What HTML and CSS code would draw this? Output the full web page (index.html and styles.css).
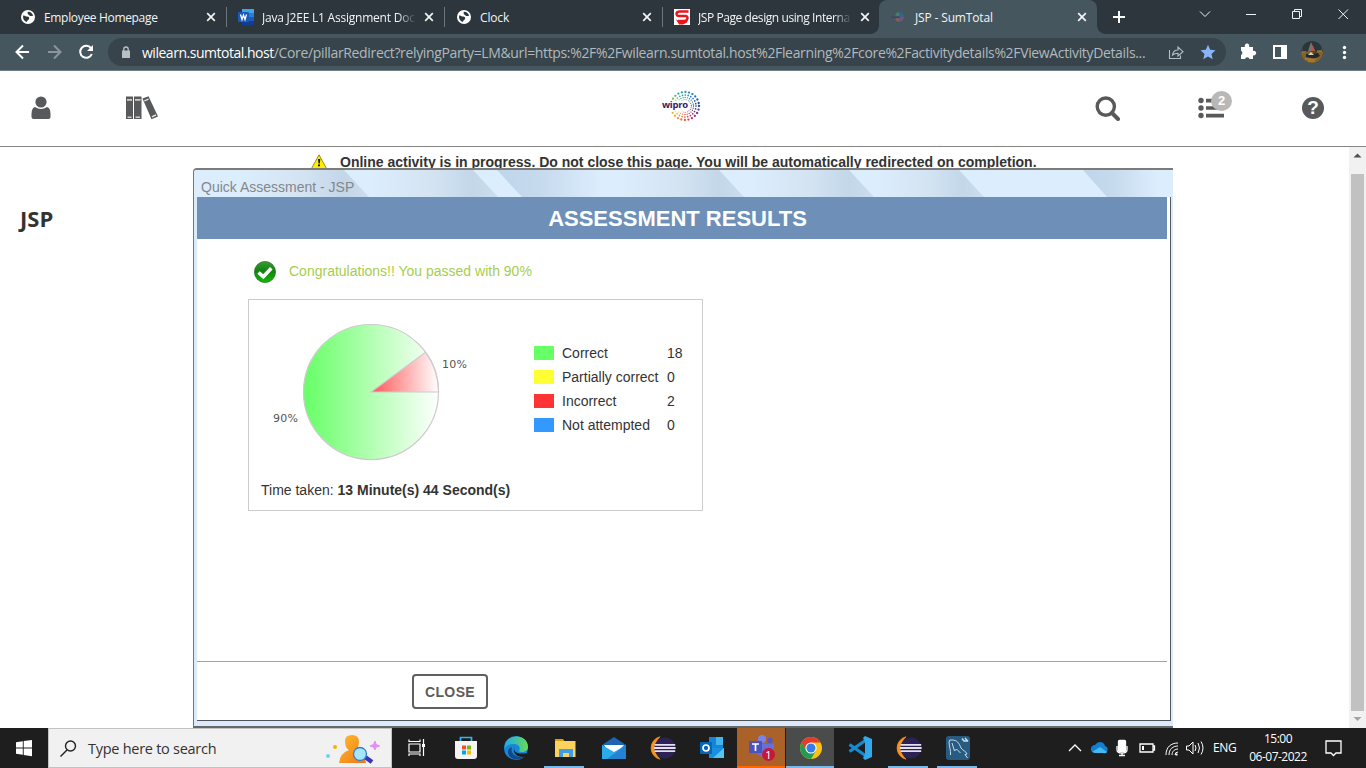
FILE: index.html
```html
<!DOCTYPE html>
<html lang="en">
<head>
<meta charset="utf-8">
<title>JSP - SumTotal</title>
<link rel="stylesheet" href="styles.css">
</head>
<body>
<svg class="defs" width="0" height="0" aria-hidden="true">
  <symbol id="globe" viewBox="0 0 14 14"><circle cx="7" cy="7" r="7" fill="#fff"/><path d="M2.200 5.600C4 5 4.200 6.600 6 6.500c1.800 0 2.700 1.100 2 2.400-.6 1.200-1.800 1.200-2.300 3-2.600-.7-4.100-3.200-3.500-6.300zM6.500 1.900c.8 1-.5 1.800.8 2.500 1.200.6 1.500 1.800 3 1.500l1.800-.2c-.4-2.100-2.600-4.100-5.600-3.800z" fill="#2c363c"/></symbol>
  <symbol id="cross" viewBox="0 0 10 10"><path d="M1.200 1.200l7.600 7.600M8.800 1.200L1.200 8.800" stroke="#f2f4f5" stroke-width="1.700"/></symbol>
  <symbol id="eclipse" viewBox="0 0 26 24"><path d="M10 .8A11.500 11.500 0 0 0 10 23.200A15 15 0 0 1 10 .8z" fill="#f7941e" stroke="#f7941e" stroke-width=".8"/><circle cx="15" cy="12" r="10.600" fill="#2c2255"/><path d="M4.600 8.900h20.600M4 12h21.600M4.600 15.100h20.600" stroke="#e4e0ee" stroke-width="1.800"/></symbol>
  <mask id="dots" maskUnits="userSpaceOnUse" x="0" y="0" width="32" height="32">
    <g fill="none" stroke="#fff" stroke-linecap="round">
      <circle cx="16" cy="16" r="14" stroke-width="2.300" stroke-dasharray="0 3.665"/>
      <circle cx="16" cy="16" r="11" stroke-width="1.700" stroke-dasharray="0 2.880"/>
      <circle cx="16" cy="16" r="8.500" stroke-width="1.300" stroke-dasharray="0 2.225"/>
      <circle cx="16" cy="16" r="6.300" stroke-width="1" stroke-dasharray="0 1.800"/>
    </g>
    <rect x="0" y="10.500" width="18" height="11" fill="#000"/>
  </mask>
</svg>

<div class="tabs">
  <div class="tab"><svg class="fav globe"><use href="#globe"/></svg><span class="tab-title t1">Employee Homepage</span><svg class="tab-x"><use href="#cross"/></svg></div>
  <div class="tab"><svg class="fav" viewBox="0 0 16 16"><path d="M4 0h12v4H4z" fill="#41a5ee"/><path d="M4 4h12v4H4z" fill="#2b7cd3"/><path d="M4 8h12v4H4z" fill="#185abd"/><path d="M4 12h12v4H4z" fill="#103f91"/><rect y="3" width="11" height="10" rx="1" fill="#185abd"/><path d="M2.500 5.500l1.500 5 1.500-4.500L7 10.500l1.500-5" fill="none" stroke="#fff" stroke-width="1.300"/></svg><span class="tab-title fade t2">Java J2EE L1 Assignment Doc</span><svg class="tab-x"><use href="#cross"/></svg></div>
  <div class="tab"><svg class="fav globe"><use href="#globe"/></svg><span class="tab-title">Clock</span><svg class="tab-x"><use href="#cross"/></svg></div>
  <div class="tab last"><svg class="fav" viewBox="0 0 16 16"><path d="M0 0h16v16H0z" fill="#fff"/><path d="M14.500 2.500H6C1.500 2.500 1.500 7 5 7h6.500c3 0 2.500 4.500-1 5H4" fill="none" stroke="#e8151b" stroke-width="2.400"/><path d="M1.500 9.500c2 3 10 3.500 13-1.500l-1.500 5.500-4 2H5z" fill="#e8151b"/></svg><span class="tab-title fade t4">JSP Page design using Interna</span><svg class="tab-x"><use href="#cross"/></svg></div>
  <div class="tab active"><svg class="fav" viewBox="0 0 16 16"><path d="M8 8V3a5 5 0 0 1 5 5z" fill="#39638a"/><path d="M8 8h5a5 5 0 0 1-5 5z" fill="#75517d"/><path d="M8 3a5 5 0 0 0-4 3l4 2z" fill="#438177"/><path d="M8 13a5 5 0 0 1-4-3l4-2z" fill="#79645c"/><path d="M0 7.300h9v1.800H0z" fill="#4b426a"/></svg><span class="tab-title t5">JSP - SumTotal</span><svg class="tab-x"><use href="#cross"/></svg></div>
  <svg class="newtab" viewBox="0 0 14 14"><path d="M7 1v12M1 7h12" stroke="#fff" stroke-width="2"/></svg>
  <svg class="winctl" viewBox="0 0 160 34" fill="none" stroke="#f0f2f3" stroke-width="1"><path d="M15 11.500l5 5 5-5M61 14.500h10M107.500 11.500h7v7h-7zM109.500 11.500v-2h7v7h-2M153.500 9.500l9.500 9.500M163 9.500l-9.500 9.500"/></svg>
</div>

<div class="toolbar">
  <svg class="nav" viewBox="0 0 94 36" fill="none" stroke-width="2"><path d="M14 18H1.500M8 11.500L1.500 18 8 24.500" stroke="#fff"/><path d="M33 18h12.500M39 11.500l6.500 6.500-6.500 6.500" stroke="#8a969c"/><path d="M76 14.200A6 6 0 1 0 76.800 20" stroke="#fff"/><path d="M78 11v6h-6z" fill="#fff"/></svg>
  <div class="omni">
    <svg class="lock" viewBox="0 0 10 12"><path d="M1 4.500h8V12H1z" fill="#b8c0c4"/><path d="M2.800 5V3.200a2.200 2.200 0 0 1 4.400 0V5" fill="none" stroke="#b8c0c4" stroke-width="1.300"/></svg>
    <span class="url"><b>wilearn.sumtotal.host</b>/Core/pillarRedirect?relyingParty=LM&amp;url=https:%2F%2Fwilearn.sumtotal.host%2Flearning%2Fcore%2Factivitydetails%2FViewActivityDetails...</span>
    <svg class="share" viewBox="0 0 16 16" fill="none" stroke="#b5bfc4" stroke-width="1.100"><path d="M1.500 6v8.500h11v-3M4.500 11C5 7.500 7 6 10 6V3l5 4.700-5 4.300V9.200C7.500 9.200 6 9.500 4.500 11z"/></svg>
    <svg class="star" viewBox="0 0 16 16"><path d="M8 .8l2.200 5 5.300.500-4 3.600 1.200 5.300L8 12.400l-4.700 2.800 1.200-5.300-4-3.600 5.300-.5z" fill="#8ab4f8"/></svg>
  </div>
  <svg class="ext" viewBox="0 0 120 36"><path d="M1 13h4a2.300 2.300 0 1 1 4 0h4v4a2.300 2.300 0 1 1 0 4.200V25H9.500a2.300 2.300 0 0 0-4.500 0H1v-4a2.300 2.300 0 0 0 0-4.200z" fill="#fff"/><path d="M34 12h12v12H34z" fill="none" stroke="#fff" stroke-width="2"/><path d="M41 12h5v12h-5z" fill="#fff"/>
    <circle cx="72" cy="18" r="11" fill="#44433b"/><path d="M61 18a11 11 0 0 0 22 0l-3-1-5 2-6-2-4 2z" fill="#84632b"/><path d="M63 12a11 11 0 0 1 18 0v5H63z" fill="#28373e"/><path d="M71 8l-3 9h7z" fill="#7e6f68"/><path d="M72.500 11l-1.500 6h4z" fill="#b9563e"/><path d="M66 20l12-1 2 3-6 3-8-2z" fill="#24282a"/><path d="M68 21l3-3 3 3z" fill="#d3d2c4"/><path d="M65 25h11M68 27h7M62 18h4M77 17h5" stroke="#c08f37"/>
    <g fill="#fff"><circle cx="104.500" cy="13.500" r="1.700"/><circle cx="104.500" cy="18.500" r="1.700"/><circle cx="104.500" cy="23.500" r="1.700"/></g></svg>
</div>

<header class="top">
  <svg class="user" viewBox="0 0 20 24" fill="#58595a"><circle cx="10" cy="6" r="5.600"/><path d="M4 11q6 4 12 0 3.500 1 3.500 7v3q0 2-2 2h-15q-2 0-2-2v-3q0-6 3.500-7z"/></svg>
  <svg class="books" viewBox="0 0 34 24"><path d="M1 .5h7V23H1zM9 .5h7.500V23H9z" fill="#58595a"/><path d="M2 3h5v1.800H2zM10 3h5.500v1.800H10zM2.500 20.500h4V22h-4zM10.500 20.500h4.500V22h-4.500z" fill="#d5cbc8"/><path d="M17.500 2.500L23.500.3 33 20.500l-6.500 2.800z" fill="#58595a"/><path d="M19.300 5l4.200-1.800M27 20.800l4-1.900" stroke="#eee" stroke-width="1.300"/></svg>
  <div class="logo"><div class="rings"></div><span>wipro</span></div>
  <svg class="search" viewBox="0 0 25 25" fill="none" stroke="#58595a"><circle cx="10.800" cy="10.600" r="8.600" stroke-width="3.400"/><path d="M17 17l6 6" stroke-width="4" stroke-linecap="round"/></svg>
  <div class="todo"><svg viewBox="0 0 26 22"><g fill="#58595a"><circle cx="3" cy="3.500" r="2.700"/><circle cx="3" cy="11" r="2.700"/><circle cx="3" cy="18.500" r="2.700"/><path d="M8 1.800h18v3.600H8zM8 9.200h18v3.600H8zM8 16.800h18v3.600H8z"/></g></svg><span class="badge">2</span></div>
  <div class="help">?</div>
</header>

<main class="page">
  <h1 class="course">JSP</h1>
  <div class="column">
    <div class="notice"><svg class="warn" viewBox="0 0 16 15"><path d="M8 .8L15.500 14.500H.5z" fill="#ffed00" stroke="#77731e" stroke-width=".8"/><path d="M7 5h2.300l-.5 4.500H7.500zM7 10.500h2v1.700H7z" fill="#111"/></svg><span>Online activity is in progress. Do not close this page. You will be automatically redirected on completion.</span></div>
    <section class="dialog">
      <div class="dialog-title"><svg class="shine" viewBox="0 0 980 27" preserveAspectRatio="none"><defs><linearGradient id="sh"><stop offset="0" stop-color="#dcedfd"/><stop offset=".5" stop-color="#d3e3f2"/><stop offset=".8" stop-color="#c3d7e9"/><stop offset="1" stop-color="#cbdded"/></linearGradient><linearGradient id="sr"><stop offset="0" stop-color="#bfd5ea"/><stop offset=".4" stop-color="#c6daed"/><stop offset="1" stop-color="#dcedfd"/></linearGradient></defs><path d="M0 0h980v27H0z" fill="#dcedfd"/><path d="M45 0h105l25 27H45z" fill="url(#sh)"/><path d="M175 0h104l25 27H175z" fill="url(#sh)"/><path d="M303 0h105v27h-80z" fill="url(#sr)"/><path d="M425 0h100l25 27H425z" fill="url(#sh)"/><path d="M555 0h100l25 27H555z" fill="url(#sh)"/><path d="M682 0h83l25 27H682z" fill="url(#sh)"/><path d="M889 0h75v27h-51z" fill="url(#sr)"/></svg><span>Quick Assessment - JSP</span></div>
      <div class="dialog-body">
        <h2 class="band">ASSESSMENT RESULTS</h2>
        <div class="results">
          <p class="pass"><svg viewBox="0 0 22 22"><defs><linearGradient id="ok" y2="1" x2="0"><stop stop-color="#399d34"/><stop offset=".45" stop-color="#128111"/><stop offset="1" stop-color="#13ba08"/></linearGradient></defs><circle cx="11" cy="11" r="10.600" fill="url(#ok)" stroke="#23772b" stroke-width=".7"/><path d="M4.500 11.500l4.800 4.200 8-8.500" fill="none" stroke="#fff" stroke-width="3.600"/></svg><span>Congratulations!! You passed with 90%</span></p>
          <div class="card">
            <div class="summary">
              <svg class="pie" viewBox="0 0 230 170"><defs><linearGradient id="g"><stop stop-color="#66ff66"/><stop offset="1" stop-color="#fff"/></linearGradient><linearGradient id="r"><stop stop-color="#ff5555"/><stop offset="1" stop-color="#fff"/></linearGradient></defs><circle cx="122" cy="92" r="67.500" fill="url(#g)" stroke="#ccc" stroke-width="1.200"/><path d="M122 92L176.600 52.300A67.500 67.500 0 0 1 189.500 92z" fill="url(#r)" stroke="#ccc" stroke-width="1.200"/><text x="193" y="68" textLength="25">10%</text><text x="24" y="122" textLength="25">90%</text></svg>
              <div class="legend">
                <i class="c1"></i><span>Correct</span><span>18</span>
                <i class="c2"></i><span>Partially correct</span><span>0</span>
                <i class="c3"></i><span>Incorrect</span><span>2</span>
                <i class="c4"></i><span>Not attempted</span><span>0</span>
              </div>
            </div>
            <p class="time">Time taken: <b>13 Minute(s) 44 Second(s)</b></p>
          </div>
        </div>
        <div class="actions"><button class="close">CLOSE</button></div>
      </div>
    </section>
  </div>
  <div class="scroll"><svg viewBox="0 0 17 27"><path d="M4.500 10.500h8l-4-4z" fill="#505050"/></svg><div class="thumb"></div><svg class="down" viewBox="0 0 17 17"><path d="M4.500 6h8l-4 4z" fill="#a3a3a3"/></svg></div>
</main>

<footer class="taskbar">
  <svg class="start" viewBox="0 0 48 40"><path d="M16 14.300l6.800-1v6.200H16zM23.700 13.100l8.300-1.200v7.600h-8.300zM16 20.500h6.800v6.300l-6.800-1zM23.700 20.500H32v7.700L23.700 27z" fill="#fff"/></svg>
  <div class="find"><svg class="glass" viewBox="0 0 17 17" fill="none" stroke="#222" stroke-width="1.400"><circle cx="10.500" cy="6" r="5"/><path d="M7 10l-6.500 6.500"/></svg><span>Type here to search</span>
    <svg class="person" viewBox="0 0 56 34"><defs><linearGradient id="pe" x2="1" y2="1"><stop stop-color="#ffbd2c"/><stop offset="1" stop-color="#ef7519"/></linearGradient></defs><circle cx="10" cy="15" r="2" fill="#f7b500"/><circle cx="3" cy="24" r="2" fill="#68d9ed"/><path d="M20 9q0-6 7-6 7 0 7 7-1 6-1 8 6 2 8 13H14q1-10 10-13-4-2-4-9z" fill="url(#pe)"/><path d="M40 25l7 5" stroke="#3b35bd" stroke-width="4.500"/><circle cx="35" cy="22" r="6.500" fill="#a7e5fa" stroke="#367ed0" stroke-width="1.300"/><path d="M50 9l1.200 3.500 3.500 1.500-3.500 1-1.200 3-1.500-3-3.500-1 3.500-1.500z" fill="#e48cf8" stroke="#e48cf8"/></svg></div>
  <div class="apps">
    <div class="app"><svg viewBox="0 0 24 24" fill="none" stroke="#fff" stroke-width="1.200"><path d="M4 8h11v8H4zM4 3.500v2h11v-2M4 20v-2h11v2M18.500 3v17"/><path d="M17 8h3v3h-3z" fill="#fff" stroke="none"/></svg></div>
    <div class="app"><svg viewBox="0 0 24 24"><path d="M6.500 6V1.500h11V6" fill="none" stroke="#32b6ee" stroke-width="1.700"/><path d="M1 5h22v15q0 3-3 3H4q-3 0-3-3z" fill="#f4f4f4"/><path d="M8 9.500h4v4H8z" fill="#f25022"/><path d="M13 9.500h4v4h-4z" fill="#7fba00"/><path d="M8 14.500h4v4H8z" fill="#00a4ef"/><path d="M13 14.500h4v4h-4z" fill="#ffb900"/></svg></div>
    <div class="app"><svg viewBox="0 0 24 24"><defs><linearGradient id="ed"><stop stop-color="#24a9e8"/><stop offset="1" stop-color="#65dc54"/></linearGradient></defs><circle cx="12" cy="12" r="12" fill="#1688d7"/><path d="M1 8C5-3 24-2 24 11c0 5-7 6-9 4 2-3 0-7-5-7-4 0-7 1-9 4z" fill="url(#ed)"/><path d="M8 11c-2 6 3 11 12 10-6 5-15 2-16-4-.4-3 1-5 4-6z" fill="#114a8b"/><path d="M11 11c-3 4 2 8 12 6l1-3v6l-3 1c-8 1-14-5-10-10z" fill="#1e1e1e"/></svg></div>
    <div class="app open"><svg viewBox="0 0 24 24"><path d="M2 3h8l2 3H2z" fill="#dca100"/><path d="M2 5h20.500v16H2z" fill="#fbd25d"/><path d="M6 21v-8h14v8h-4v-4h-6v4z" fill="#3f9de5"/></svg></div>
    <div class="app"><svg viewBox="0 0 24 24"><path d="M0 9L12 1l12 8v14H0z" fill="#1d65b2"/><path d="M2 9h20l-8 9H8z" fill="#fff"/><path d="M0 9l12 7 12-7v14H0z" fill="#2bace9"/><path d="M24 9v14H5z" fill="#2383d2"/></svg></div>
    <div class="app"><svg class="ecl"><use href="#eclipse"/></svg></div>
    <div class="app"><svg viewBox="0 0 24 24"><path d="M9 1h14v16H9z" fill="#1685d8"/><path d="M16 1h7v8h-7z" fill="#45b5ee"/><path d="M9 12h15v10H9z" fill="#1890dd"/><path d="M24 12L13 22h11z" fill="#54c6f4"/><rect y="6" width="12" height="12" rx="1" fill="#0567b5"/><circle cx="6" cy="12" r="3" fill="none" stroke="#fff" stroke-width="1.700"/></svg></div>
    <div class="app teams"><svg viewBox="0 0 28 26"><circle cx="14" cy="4" r="4" fill="#7b83eb"/><circle cx="22" cy="5.500" r="2.700" fill="#5059c9"/><path d="M8 9h18v9q-3 5-8 4-9 0-10-7z" fill="#6670d6"/><path d="M1 6h13v12H1z" fill="#4b53bc"/><path d="M4 9h7M7.500 9v7" stroke="#fff" stroke-width="1.700"/></svg><span class="count">1</span></div>
    <div class="app chrome"><svg viewBox="0 0 24 24"><circle cx="12" cy="12" r="11" fill="#fbc116"/><path d="M2.500 6.500A11 11 0 0 1 21.500 6.500H12L7.200 15z" fill="#e33b2e"/><path d="M2.500 6.500A11 11 0 0 0 12 23l5-8.500H7.200z" fill="#229c52"/><circle cx="12" cy="12" r="5.600" fill="#fff"/><circle cx="12" cy="12" r="4.500" fill="#367be7"/></svg></div>
    <div class="app"><svg viewBox="0 0 24 24"><path d="M1.500 8.500L18 20M1.500 15.500L18 4" stroke="#168bd4" stroke-width="3.200"/><path d="M17 0l7 3v18l-7 3-2-2 2-4V6l-2-4z" fill="#32a9ed"/></svg></div>
    <div class="app open"><svg class="ecl"><use href="#eclipse"/></svg></div>
    <div class="app open"><svg viewBox="0 0 24 24"><rect width="24" height="24" rx="3" fill="#285b82"/><path d="M4.500 19C5 14 3 10 3 6q0-3 3-2c5 0 7 3 9 8 2 3 5 3 6 6l-2 .5 2.500 3.500M6 7l2.500 8 2-2 4 4" fill="none" stroke="#c9dce9" stroke-width="1"/><path d="M16 2.500l2 2.500h3M19 2l3 3.500" stroke="#c9dce9" stroke-width="1.500" fill="none"/></svg></div>
  </div>
  <div class="tray">
    <svg class="icons" viewBox="0 0 138 40" fill="none" stroke="#fff" stroke-width="1.300"><path d="M1 23l6-6 6 6"/><g stroke="none"><path d="M27 25q-5-1-4-5 1-3 4-3 2-3 5-3 4 0 5 4 4 1 2 6l-3 1z" fill="#137fd1"/><path d="M24 24l8-5 7 5q-1 2-4 1H27z" fill="#45b8f2"/></g><rect x="50.500" y="12.500" width="7" height="11" rx="1" fill="#fff"/><path d="M49 18v4q0 3 5 3t5-3v-4M54 25v3M51 27.500h6M72 16h13v8H72zM85 18h1.500v4H85"/><path d="M74 18h2v4h-2z" fill="#fff" stroke="none"/><g stroke-width="1"><path d="M98 27c0-8 5-12 12-12M101 27c0-6 4-9 9-9M104 27c0-4 3-6 6-6M107 27q0-3 3-3"/></g><path d="M107.500 26.500h2" stroke-width="2"/><path d="M118.500 18h2.500l4-4v12l-4-4h-2.500zM127 17q2 3 0 6M130 15q3 5 0 10M133 13.500q4 6.500 0 13" stroke-width="1"/></svg>
    <span class="lang">ENG</span>
    <div class="clock"><span>15:00</span><span>06-07-2022</span></div>
    <svg class="bell" viewBox="0 0 18 18" fill="none" stroke="#fff" stroke-width="1.300"><path d="M1 2h15v12h-5l-2.500 2.500L6 14H1z"/></svg>
  </div>
</footer>
</body>
</html>
```
FILE: styles.css
```css
* { box-sizing: border-box; }
body { margin: 0; width: 1366px; height: 768px; overflow: hidden; background: #fff; color: #333; font-family: "Liberation Sans", Arial, sans-serif; display: flex; flex-direction: column; }
svg { display: block; flex: none; }
.defs { position: absolute; }
h1, h2, p { margin: 0; }

.tabs { height: 34px; flex: none; display: flex; background: #2c363c; padding-left: 9px; font: 12px "Open Sans", "Noto Sans", sans-serif; color: #f2f4f5; }
.tab { width: 218px; height: 34px; flex: none; display: flex; align-items: center; padding-left: 11px; position: relative; }
.tab:not(.last):not(.active)::after { content: ""; position: absolute; right: 0; top: 7px; width: 1px; height: 20px; background: #6b767c; }
.tab.last { width: 217px; }
.tab.active { background: #46565f; border-radius: 8px 8px 0 0; width: 218px; margin-left: -1px; padding-left: 12px; }
.tab.active::before, .tab.active::after { content: ""; position: absolute; bottom: 0; width: 8px; height: 8px; }
.tab.active::before { left: -8px; background: radial-gradient(circle at 0 0, transparent 7.5px, #46565f 8px); }
.tab.active::after { right: -8px; background: radial-gradient(circle at 100% 0, transparent 7.5px, #46565f 8px); }
.fav { width: 16px; height: 16px; margin-right: 8px; }
.fav.globe { width: 14px; height: 14px; margin: 0 9px 0 1px; }
.tab-title { width: 154px; flex: none; white-space: nowrap; letter-spacing: -.15px; }
.t1 { letter-spacing: -.33px; }
.t2 { letter-spacing: -.22px; }
.t4 { letter-spacing: -.42px; }
.fade { mask-image: linear-gradient(90deg, #000 88%, transparent); }
.tab-x { width: 10px; height: 10px; margin-left: 8px; }
.newtab { width: 14px; height: 14px; margin: 10px 0 0 15px; }
.winctl { width: 160px; height: 34px; margin-left: 59px; overflow: visible; }

.toolbar { height: 37px; flex: none; display: flex; background: #46565f; border-bottom: 1px solid #6f7d84; }
.nav { width: 94px; height: 36px; margin-left: 15px; }
.omni { width: 1118px; height: 28px; margin: 4px 0 0 -1px; border-radius: 14px; background: #37444b; display: flex; align-items: center; padding-left: 13px; }
.lock { width: 10px; height: 12px; margin-right: 11px; }
.url { width: 1026px; white-space: nowrap; font: 14px "Open Sans", "Noto Sans", sans-serif; color: #b0b9be; letter-spacing: -.35px; }
.url b { font-weight: 400; color: #fff; letter-spacing: -.48px; }
.share { width: 16px; height: 16px; }
.star { width: 16px; height: 16px; margin-left: 16px; }
.ext { width: 120px; height: 36px; margin-left: 14px; }

.top { height: 76px; flex: none; display: flex; border-bottom: 1px solid #858585; }
.user { width: 20px; height: 24px; margin: 25px 0 0 31px; }
.books { width: 34px; height: 24px; margin: 25px 0 0 74px; }
.logo { width: 40px; height: 32px; margin: 19px 0 0 502px; position: relative; font: 700 9.5px/12px "Open Sans", sans-serif; color: #34205f; }
.rings { width: 32px; height: 32px; margin-left: 8px; background: conic-gradient(#23a0c5, #276dad 45deg, #24458d 90deg, #6c3687 120deg, #c42a78 150deg, #eb5540 180deg, #f6aa2e 225deg, #dbce38 270deg, #50b779 315deg, #21a49f 345deg, #23a0c5); mask: url(#dots); }
.logo span { position: absolute; left: 1px; top: 9px; letter-spacing: -.3px; }
.search { width: 25px; height: 25px; margin: 25px 0 0 394px; }
.todo { width: 36px; height: 32px; margin: 20px 0 0 77px; position: relative; }
.todo svg { width: 26px; height: 22px; margin: 6px 0 0 1px; }
.badge { position: absolute; left: 14px; top: 0; width: 21px; height: 20px; border-radius: 50%; background: #bab8b7; color: #fff; font: 700 13px/20px "Liberation Sans", sans-serif; text-align: center; }
.help { width: 22px; height: 22px; border-radius: 50%; margin: 26px 0 0 69px; background: #58595a; color: #fff; font: 700 19px/22px "Liberation Sans", sans-serif; text-align: center; }

.page { height: 581px; flex: none; display: flex; }
.course { width: 193px; padding: 57px 0 0 20px; font: 700 22px/28px "Open Sans", sans-serif; color: #333; }
.column { width: 980px; }
.notice { height: 21px; overflow: hidden; display: flex; padding-left: 118px; font-weight: 700; font-size: 14px; line-height: 17px; color: #333; padding-top: 7px; white-space: nowrap; }
.warn { width: 16px; height: 15px; margin-right: 13px; }
.dialog { height: 560px; border-top: 2px solid #7c7b78; border-left: 1px solid #74777c; border-bottom: 2px solid #66696b; border-radius: 4px 0 0 0; background: #dcebfb; overflow: hidden; }
.dialog-title { height: 27px; position: relative; padding: 8px 0 0 7px; font-size: 14px; line-height: 18px; color: #858789; }
.shine { position: absolute; left: 0; top: 0; width: 980px; height: 27px; }
.dialog-title span { position: relative; }
.dialog-body { margin-left: 3px; width: 974px; height: 524px; background: #fff; border-right: 1px solid #555a60; border-bottom: 1px solid #50545a; padding-right: 3px; }
.band { height: 42px; background: #6d8fb8; color: #fff; font: 700 22px/43px "Liberation Sans", sans-serif; text-align: center; padding-right: 9px; }
.results { height: 422px; padding: 22px 0 0 51px; }
.pass { height: 22px; display: flex; align-items: center; padding-left: 6px; font-size: 14px; color: #a6ce4c; }
.pass svg { width: 22px; height: 22px; margin-right: 13px; }
.pass span { padding-bottom: 2px; }
.card { width: 455px; height: 212px; margin-top: 16px; border: 1px solid #ccc; font-size: 14px; }
.summary { display: flex; height: 182px; }
.pie { width: 230px; height: 170px; }
.pie text { font: 11px "DejaVu Sans", sans-serif; fill: #555; }
.legend { display: grid; grid-template-columns: 28px 105px 30px; grid-auto-rows: 24px; align-items: center; padding: 41px 0 0 55px; height: 137px; white-space: nowrap; }
.legend i { width: 20px; height: 14px; }
.c1 { background: #6f6; } .c2 { background: #ff3; } .c3 { background: #f33; } .c4 { background: #39f; }
.time { padding-left: 12px; line-height: 16px; }
.actions { height: 59px; border-top: 1px solid #a0a4a4; padding: 12px 0 0 215px; }
.close { width: 76px; height: 35px; background: #fff; border: 2px solid #606060; border-radius: 4px; padding: 0; color: #5c5c5c; font: 700 14px "Liberation Sans", sans-serif; letter-spacing: .4px; display: block; }
.scroll { width: 17px; height: 581px; margin-left: 176px; background: #f1f1f1; }
.scroll svg { width: 17px; height: 27px; }
.thumb { height: 537px; margin: 0 2px; background: #c1c1c1; }
.scroll .down { height: 17px; }

.taskbar { height: 40px; flex: none; display: flex; background: #1e1e1e; color: #fff; font-family: "Open Sans", "Noto Sans", sans-serif; }
.start { width: 48px; height: 40px; }
.find { width: 344px; height: 40px; background: #f1f1f1; border: 1px solid #c2c2c2; display: flex; align-items: center; color: #333; font-size: 14.5px; padding-left: 11px; }
.glass { width: 17px; height: 17px; margin-right: 11px; }
.find span { width: 237px; letter-spacing: -.27px; white-space: nowrap; }
.person { width: 56px; height: 34px; margin-top: 2px; }
.apps { display: flex; flex: none; width: 590px; }
.app { width: 49px; height: 40px; flex: none; display: flex; align-items: center; justify-content: center; position: relative; }
.app:nth-child(3), .app:nth-child(8) { margin-left: 1px; }
.app svg { width: 24px; height: 24px; }
.app .ecl { width: 26px; }
.open::after, .teams::after, .chrome::after { content: ""; position: absolute; bottom: 0; left: 4px; right: 5px; height: 2px; background: #76b9ed; }
.teams { background: linear-gradient(90deg, #aa6229 48px, #1e1e1e 48px); }
.teams::after { background: #f60; left: 0; right: 1px; }
.chrome { background: linear-gradient(90deg, #4a4b4b 48px, #1e1e1e 48px); }
.chrome::after { left: 0; right: 1px; }
.app.teams svg { width: 28px; height: 26px; }
.count { position: absolute; left: 25px; top: 20px; width: 13px; height: 13px; border-radius: 50%; background: #c4173b; font: 11px/13px "Open Sans", sans-serif; text-align: center; }
.tray { display: flex; margin-left: 86px; white-space: nowrap; }
.icons { width: 138px; height: 40px; }
.lang { width: 36px; margin-left: 7px; font-size: 12px; line-height: 40px; letter-spacing: -.3px; }
.clock { width: 58px; font-size: 12px; line-height: 18px; display: flex; flex-direction: column; align-items: center; padding-top: 2px; letter-spacing: -.5px; }
.bell { width: 18px; height: 18px; margin: 11px 0 0 18px; }
```
